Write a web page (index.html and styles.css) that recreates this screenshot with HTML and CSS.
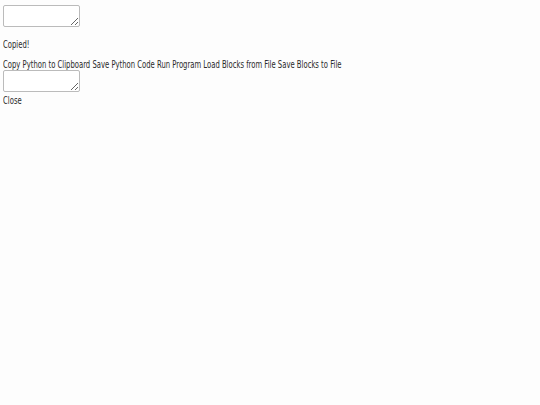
FILE: index.html
```html
<!DOCTYPE html>
<html>
<head>
<meta charset="utf-8">
<link rel="stylesheet" href="styles.css">
</head>
<body class="page">
<textarea class="box"></textarea>
<p class="msg txt">Copied!</p>
<div class="actions txt">
<span class="act">Copy Python to Clipboard</span>
<span class="act">Save Python Code</span>
<span class="act">Run Program</span>
<span class="act">Load Blocks from File</span>
<span class="act">Save Blocks to File</span>
</div>
<textarea class="box"></textarea>
<div class="close txt">Close</div>
</body>
</html>
```
FILE: styles.css
```css
html { background: #fdfdfd; }
.page {
  margin: 0;
  padding: 5px 3px;
  font-family: "DejaVu Sans Condensed", "DejaVu Sans", sans-serif;
  font-size: 10.5px;
  color: #2a2a2a;
}
.txt {
  white-space: nowrap;
  transform: scaleX(0.725);
  transform-origin: left center;
}
.box {
  display: block;
  box-sizing: border-box;
  width: 77px;
  height: 22px;
  margin: 0;
  border: 1px solid #bbb;
  border-radius: 2px;
  background: #fff;
  resize: vertical;
}
.msg { margin: 12px 0 9px; line-height: 11px; }
.actions { line-height: 10px; height: 11px; }
.close { line-height: 10px; margin-top: 3px; }
```
